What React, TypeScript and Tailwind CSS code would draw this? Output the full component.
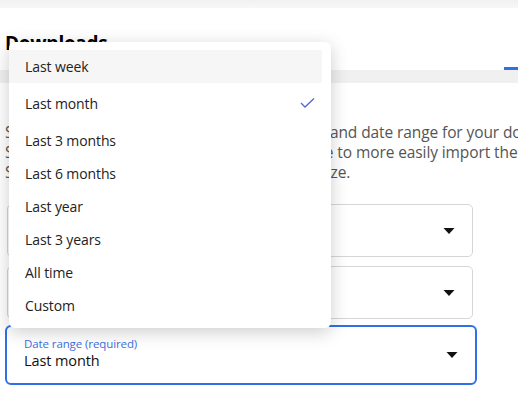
import React from "react";

const Arrow = () => (
  <svg width="12" height="7" viewBox="0 0 12 7" className="absolute right-[17px] top-1/2 -translate-y-1/2">
    <path d="M0.5 0.5 L11.5 0.5 L6 6.5 Z" fill="#111" />
  </svg>
);

const items = [
  { label: "Last week", h: "h-[33px]", hl: true },
  { label: "Last month", h: "h-[40px]", check: true },
  { label: "Last 3 months", h: "h-[34px]" },
  { label: "Last 6 months", h: "h-[33px]" },
  { label: "Last year", h: "h-[33px]" },
  { label: "Last 3 years", h: "h-[33px]" },
  { label: "All time", h: "h-[33px]" },
  { label: "Custom", h: "h-[33px]" },
];

export default function App() {
  return (
    <div
      className="relative w-[518px] h-[398px] overflow-hidden bg-white text-[#1a1a1a]"
      style={{ fontFamily: '"Open Sans", "Noto Sans", sans-serif' }}
    >
      <div className="h-[8px] bg-gradient-to-b from-[#f1f1f1] to-[#f7f7f7]" />
      <div className="mt-[21px] h-[28px] pl-[5px] text-[19px] leading-[28px] font-bold tracking-[-0.3px] text-black">
        Downloads
      </div>
      <div className="mt-[10px] flex justify-end">
        <div className="h-[3px] w-[14px] bg-[#2f6fe8]" />
      </div>
      <div className="h-[13px] bg-[#f0f0f0]" />
      <div className="mt-[39px] w-[800px] pl-[5px] text-[15.5px] leading-[20px] text-[#555] tracking-[-0.1px] whitespace-nowrap">
        <div>Select the type of data you want, file formats, and date range for your download.</div>
        <div>Select JSON format if you would like to be able to more easily import the data into another service.</div>
        <div>Select a shorter date range for a smaller file size.</div>
      </div>
      <div className="mt-[22px] w-[468px] ml-[5px] flex flex-col">
        <div className="relative h-[53px] rounded-[5px] border border-[#d6d6d6] ml-[2px]">
          <Arrow />
        </div>
        <div className="relative mt-[9px] h-[53px] rounded-[5px] border border-[#d6d6d6] ml-[2px]">
          <Arrow />
        </div>
        <div className="relative mt-[6px] h-[60px] rounded-[6px] border-2 border-[#2f6fe8] mr-[-4px] pl-[17px] pt-[10px]">
          <div className="text-[11.5px] leading-[14px] text-[#3d6fe0] tracking-[-0.1px]">Date range (required)</div>
          <div className="text-[14.5px] leading-[20px] text-[#111] tracking-[-0.1px]">Last month</div>
          <Arrow />
        </div>
      </div>

      <div className="absolute left-[9px] top-[42px] w-[322px] h-[286px] rounded-[6px] bg-white shadow-[0_4px_18px_rgba(0,0,0,0.2)] pt-[8px]">
        {items.map((it) => (
          <div
            key={it.label}
            className={`relative flex items-center ${it.h} pl-[16px] mr-[9px] text-[14px] tracking-[-0.1px] text-[#222] ${
              it.hl ? "bg-[#f6f6f6]" : ""
            }`}
          >
            {it.label}
            {it.check && (
              <svg width="15" height="11" viewBox="0 0 15 11" className="absolute right-[7px] top-1/2 -translate-y-1/2">
                <path d="M1 5.5 L5 9.5 L14 1" fill="none" stroke="#4f68e0" strokeWidth="1.3" />
              </svg>
            )}
          </div>
        ))}
      </div>
    </div>
  );
}
